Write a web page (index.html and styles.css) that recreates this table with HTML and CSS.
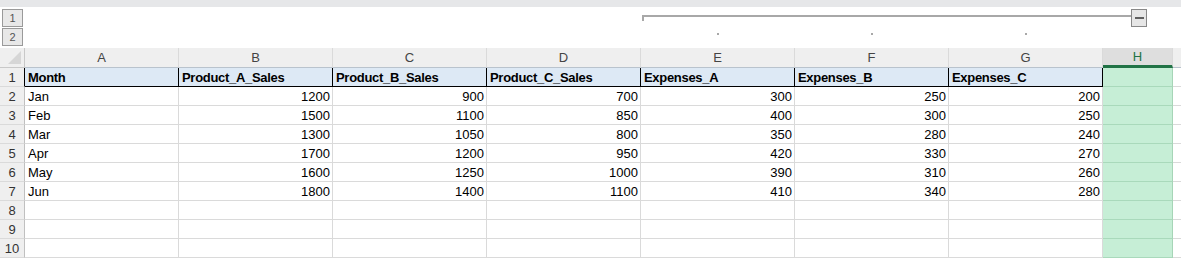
FILE: index.html
```html
<!DOCTYPE html>
<html lang="en">
<head>
  <meta charset="UTF-8">
  <title>Sheet1</title>
  <link rel="stylesheet" href="styles.css">
</head>
<body>

<!-- TOP BAND -->
<div class="topband"></div>

<!-- OUTLINE (grouping) AREA -->
<div class="outline">
  <div class="levels">
    <span class="lvl">1</span>
    <span class="lvl">2</span>
  </div>
  <div class="group">
    <div class="bracket"></div>
    <span class="collapse"><i></i></span>
  </div>
  <div class="dot col-e"></div>
  <div class="dot col-f"></div>
  <div class="dot col-g"></div>
</div>

<!-- SHEET GRID -->
<div class="sheet" id="sheet">
  <div class="corner"></div>
  <div class="colhead">A</div>
  <div class="colhead">B</div>
  <div class="colhead">C</div>
  <div class="colhead">D</div>
  <div class="colhead">E</div>
  <div class="colhead">F</div>
  <div class="colhead">G</div>
  <div class="colhead sel">H</div>
  <div class="colhead"></div>
</div>

<script>
  const head = ["Month","Product_A_Sales","Product_B_Sales","Product_C_Sales","Expenses_A","Expenses_B","Expenses_C"];
  const data = [
    ["Jan",1200,900,700,300,250,200],
    ["Feb",1500,1100,850,400,300,250],
    ["Mar",1300,1050,800,350,280,240],
    ["Apr",1700,1200,950,420,330,270],
    ["May",1600,1250,1000,390,310,260],
    ["Jun",1800,1400,1100,410,340,280]
  ];
  const sheet = document.getElementById("sheet");
  let html = '';

  // header row (row 1)
  html += '<div class="rownum first">1</div>';
  head.forEach(h => { html += `<div class="cell hdr">${h}</div>`; });
  html += '<div class="cell selcol"></div><div class="cell"></div>';

  // data rows
  for (let r = 0; r < 9; r++) {
    const row = data[r];
    html += `<div class="rownum">${r + 2}</div>`;
    for (let c = 0; c < 7; c++) {
      if (!row) { html += '<div class="cell"></div>'; continue; }
      html += c === 0
        ? `<div class="cell">${row[c]}</div>`
        : `<div class="cell num">${row[c]}</div>`;
    }
    html += '<div class="cell selcol"></div><div class="cell"></div>';
  }
  sheet.insertAdjacentHTML("beforeend", html);
</script>
</body>
</html>
```

FILE: styles.css
```css
/* --- Global --- */
body { margin: 0; background: #fff; font-family: 'Liberation Sans', Arial, sans-serif; overflow: hidden; }

.topband { height: 7px; background: #e6e7e9; }

/* --- Outline area --- */
.outline {
  display: grid;
  grid-template-columns: 25px repeat(7, 154px) 70px 60px;
  grid-template-rows: 21px 20px;
  height: 41px;
}
.levels { grid-row: 1 / 3; grid-column: 1; display: flex; flex-direction: column; gap: 1px; padding: 2px 0 0 2px; }
.lvl {
  width: 19px; height: 16px; border: 1px solid #9a9a9a; background: #e8e8e8;
  color: #555; font-size: 11px; line-height: 16px; text-align: center;
}
.group { grid-row: 1; grid-column: 6 / 10; display: flex; align-items: flex-start; padding: 2px 26px 0 1px; }
.bracket { flex: 1; height: 4px; margin-top: 6px; border-top: 2px solid #a8a8a8; border-left: 2px solid #a8a8a8; }
.collapse {
  width: 14px; height: 16px; border: 1px solid #888; background: #e6e6e6;
  display: flex; align-items: center; justify-content: center;
}
.collapse i { width: 9px; height: 2px; background: #606060; }
.dot { grid-row: 2; width: 2px; height: 2px; background: #a8a8a8; justify-self: center; margin-top: 5px; }
.col-e { grid-column: 6; }
.col-f { grid-column: 7; }
.col-g { grid-column: 8; }

/* --- Sheet --- */
.sheet {
  display: grid;
  grid-template-columns: 25px repeat(7, 154px) 70px 60px;
  grid-template-rows: 20px repeat(10, 19px);
  font-size: 13px;
}
.sheet > div { box-sizing: border-box; white-space: nowrap; overflow: hidden; }

.corner { background: #efefef; border-right: 1px solid #c8c8c8; border-bottom: 1px solid #c8c8c8; position: relative; }
.corner::after {
  content: ""; position: absolute; right: 3px; bottom: 3px;
  border-left: 13px solid transparent; border-bottom: 13px solid #d6d6d6;
}
.colhead {
  background: #efefef; color: #444; text-align: center; line-height: 19px;
  border-right: 1px solid #dadada; border-bottom: 1px solid #b9c3cd;
}
.colhead.sel { background: #dedede; color: #217346; border-bottom: 3px solid #217346; line-height: 17px; }

.rownum {
  background: #efefef; color: #333; text-align: center; line-height: 19px;
  border-right: 1px solid #c0c0c0; border-bottom: 1px solid #dadada;
}
.rownum.first { border-right-color: #000; }

.cell { border-right: 1px solid #dadada; border-bottom: 1px solid #dadada; padding: 0 3px; line-height: 19px; color: #000; }
.cell.num { text-align: right; padding-right: 2px; }
.cell.hdr { background: #dde9f5; font-weight: bold; letter-spacing: -0.3px; border-right-color: #000; border-bottom-color: #000; }
.cell.selcol { background: #c6eed6; border-right-color: #a6d5b7; border-bottom-color: #a9d9bb; }
```
